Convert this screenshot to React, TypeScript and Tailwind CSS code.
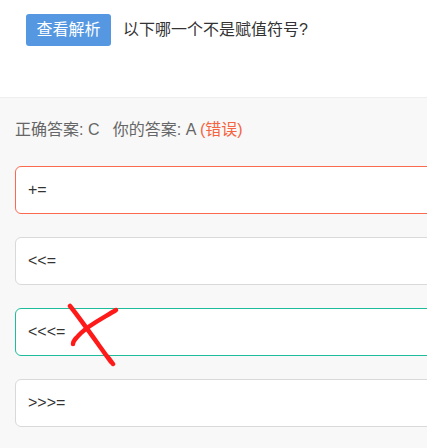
const options = [
    { label: "+=", state: "wrong" },
    { label: "<<=", state: "none" },
    { label: "<<<=", state: "right" },
    { label: ">>>=", state: "none" },
];

const borderFor: Record<string, string> = {
    wrong: "border-[#fb6a4f]",
    right: "border-[#1dbd9c]",
    none: "border-[#d9d9d9]",
};

function CrossMark() {
    return (
        <svg className="absolute left-[37px] top-[-6px]" width="70" height="64" viewBox="0 0 70 64" fill="none">
            <path d="M17 3 C 26 14, 40 34, 58 59 M 53 52 C 56 55, 58 58, 60 61" stroke="#ff1a1a" strokeWidth="4.5" strokeLinecap="round" />
            <path d="M63 7 C 50 15, 36 22, 28 30 C 23 35, 20 38, 20 41" stroke="#ff1a1a" strokeWidth="4.5" strokeLinecap="round" />
        </svg>
    );
}

export default function App() {
    return (
        <div className="w-[427px] h-[448px] overflow-hidden bg-[#f8f8f8]" style={{ fontFamily: '"Liberation Sans", "Noto Sans CJK SC", sans-serif' }}>
            {/* question header */}
            <div className="h-[98px] bg-white border-b border-[#eeeeee] flex items-start pt-[14px] pl-[26px] gap-3">
                <button className="h-8 w-[85px] rounded-[3px] bg-[#5598e1] text-white text-[16px]">查看解析</button>
                <span className="text-[16px] text-[#333] leading-8">以下哪一个不是赋值符号?</span>
            </div>

            {/* answer */}
            <div className="pl-[15px] pt-[22px] text-[16px] text-[#666] leading-5">
                正确答案: C&nbsp;&nbsp;&nbsp;你的答案: A <span className="text-[#f5643f]">(错误)</span>
            </div>

            <div className="flex flex-col gap-[23px] pl-[15px] pt-[26px]">
                {options.map(({ label, state }, index) => (
                    <div key={index} className={`relative w-[440px] h-[48px] bg-white border rounded-[6px] flex items-center pl-[12px] text-[16px] text-[#333] ${borderFor[state]}`}>
                        {label}
                        {state === "right" && <CrossMark />}
                    </div>
                ))}
            </div>
        </div>
    );
}
